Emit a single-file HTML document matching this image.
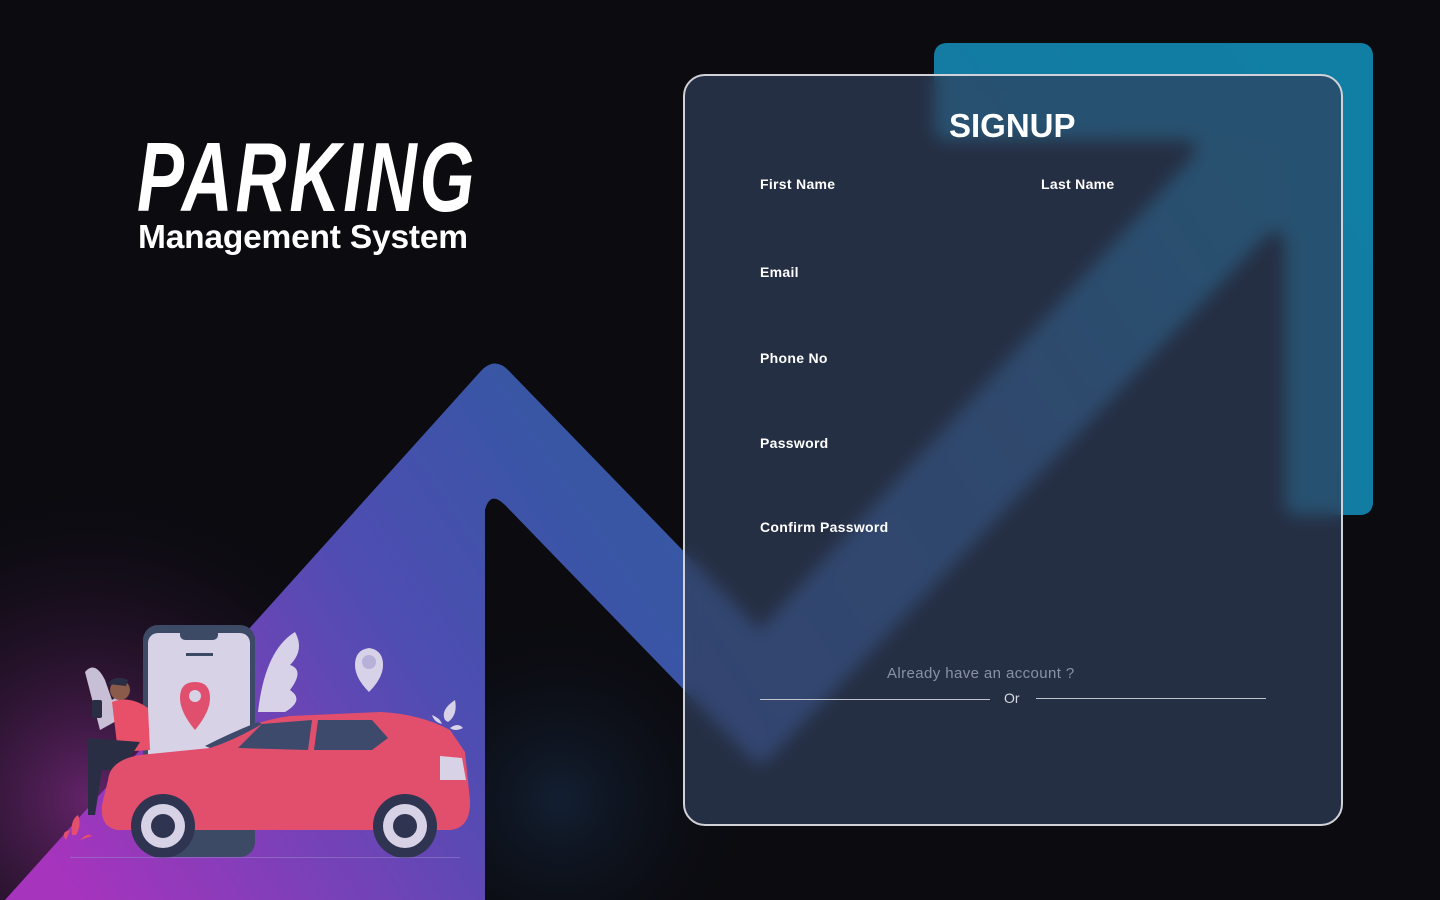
<!DOCTYPE html>
<html><head><meta charset="utf-8"><style>
html,body{margin:0;padding:0;}
body{width:1440px;height:900px;overflow:hidden;background:#0b0b10;position:relative;font-family:"Liberation Sans",sans-serif;}
svg.bg{position:absolute;left:0;top:0;}
.t1{position:absolute;left:137px;top:128px;font:italic bold 98px/1 "Liberation Sans",sans-serif;color:#fff;transform:scaleX(0.72);transform-origin:left top;letter-spacing:4px;}
.t2{position:absolute;left:138px;top:221px;font:bold 33.5px/1 "Liberation Sans",sans-serif;color:#fff;letter-spacing:-0.2px;}
.card{position:absolute;left:683px;top:74px;width:656px;height:748px;border:2px solid #d0d2d8;border-radius:22px;background:rgba(48,62,90,0.7);backdrop-filter:blur(8px);}
.lab{position:absolute;color:#fff;font:bold 14px/1 "Liberation Sans",sans-serif;letter-spacing:0.3px;}
.h{position:absolute;left:949px;top:109px;color:#fff;font:bold 33px/1 "Liberation Sans",sans-serif;}
.al{position:absolute;left:887px;top:666px;color:#8a90a8;font:15px/1 "Liberation Sans",sans-serif;letter-spacing:0.4px;}
.or{position:absolute;left:1004px;top:691px;color:#d6d8de;font:14px/1 "Liberation Sans",sans-serif;}
.ln{position:absolute;height:1px;background:#bfc3cc;}
</style></head><body>
<svg class="bg" width="1440" height="900" viewBox="0 0 1440 900">
<defs>
<linearGradient id="g1" x1="80" y1="900" x2="1300" y2="80" gradientUnits="userSpaceOnUse">
<stop offset="0" stop-color="#a634bd"/><stop offset="0.28" stop-color="#4f4db2"/><stop offset="0.42" stop-color="#3a55a6"/><stop offset="0.7" stop-color="#2d5f98"/><stop offset="0.88" stop-color="#1a77a2"/><stop offset="1" stop-color="#127ea3"/>
</linearGradient>
<radialGradient id="glow" cx="90" cy="800" r="330" gradientUnits="userSpaceOnUse">
<stop offset="0" stop-color="#7a2a80" stop-opacity="0.8"/><stop offset="1" stop-color="#0b0b10" stop-opacity="0"/>
</radialGradient>
<radialGradient id="glow2" cx="560" cy="800" r="200" gradientUnits="userSpaceOnUse">
<stop offset="0" stop-color="#14243a" stop-opacity="0.8"/><stop offset="1" stop-color="#0b0b10" stop-opacity="0"/>
</radialGradient>
</defs>
<rect width="1440" height="900" fill="#0b0b10"/>
<rect width="600" height="900" fill="url(#glow)"/>
<rect x="485" y="500" width="400" height="400" fill="url(#glow2)"/>
<path d="M5 900 L480 372 Q495 355 510 372 L760 630 L1190 160 Q1205 140 1180 140 L948 140 Q934 140 934 126 L934 57 Q934 43 948 43 L1359 43 Q1373 43 1373 57 L1373 501 Q1373 515 1359 515 L1299 515 Q1285 515 1285 501 L1285 245 Q1282 220 1262 240 L770 758 Q760 768 750 758 L505 505 Q490 490 485 510 L485 900 Z" fill="url(#g1)"/>
<path d="M948 43 L1359 43 Q1373 43 1373 57 L1373 501 Q1373 515 1359 515 L1299 515 Q1285 515 1285 501 L1285 140 L948 140 Q934 140 934 126 L934 57 Q934 43 948 43Z" fill="#127ea3" opacity="0.85"/>
<g>
<path d="M85 672 Q95 660 105 680 L112 700 Q125 690 118 720 L100 730 Z" fill="#d8d2e8" opacity="0.9"/>
<path d="M258 712 Q265 650 295 632 Q305 650 290 665 Q305 670 290 690 Q305 700 285 712 Z" fill="#d8d2e8"/>
<path d="M355 665 Q355 650 369 648 Q383 650 383 665 Q383 678 369 692 Q355 678 355 665 Z" fill="#d8d2e8"/><circle cx="369" cy="662" r="7" fill="#b7b0d8"/>
<path d="M445 720 Q440 710 455 700 Q458 715 448 722 Z M432 715 Q440 718 442 724 Q434 722 432 715Z M450 728 Q458 722 463 728 Q455 732 450 728Z" fill="#d8d2e8"/>
<rect x="143" y="625" width="112" height="232" rx="15" fill="#3d4a66"/>
<rect x="148" y="633" width="102" height="160" rx="10" fill="#d8d2e6"/>
<rect x="180" y="628" width="38" height="12" rx="5" fill="#3d4a66"/>
<rect x="186" y="653" width="27" height="3" fill="#3d4a66"/>
<path d="M180 698 Q180 682 195 682 Q210 682 210 698 Q210 712 195 730 Q180 712 180 698Z" fill="#e0506e"/><circle cx="195" cy="696" r="6" fill="#d8d2e6"/>
<circle cx="120" cy="690" r="10" fill="#8a5a4a"/><path d="M108 684 Q115 674 128 680 L126 686 Z" fill="#2a2e44"/>
<path d="M112 702 Q130 695 148 708 L150 750 L118 752 Z" fill="#e8506a"/>
<path d="M88 738 L140 742 L122 770 L102 770 L95 815 L88 815 Z" fill="#2a2e44"/>
<rect x="92" y="700" width="10" height="18" rx="2" fill="#2a2e44"/>
<path d="M108 780 Q110 760 140 755 L210 748 Q245 722 290 716 L380 712 Q420 714 450 730 L465 752 L470 800 Q471 828 450 830 L118 830 Q100 828 102 805 Z" fill="#e24f6d"/>
<path d="M238 748 L262 724 L312 720 L308 750 Z" fill="#3e4a6c"/>
<path d="M318 720 L372 720 L388 738 L372 750 L314 750 Z" fill="#3e4a6c"/>
<path d="M210 748 Q235 740 262 724 L258 722 Q230 733 205 746 Z" fill="#3e4a6c"/>
<path d="M440 756 L462 758 L466 780 L440 780 Z" fill="#d8d2e6"/>
<circle cx="163" cy="826" r="32" fill="#2f3450"/><circle cx="163" cy="826" r="22" fill="#d8d2e6"/><circle cx="163" cy="826" r="12" fill="#2f3450"/>
<circle cx="405" cy="826" r="32" fill="#2f3450"/><circle cx="405" cy="826" r="22" fill="#d8d2e6"/><circle cx="405" cy="826" r="12" fill="#2f3450"/>
<path d="M72 835 Q70 820 78 815 Q82 825 76 835 Z M66 840 Q60 832 70 830 Z M80 840 Q88 832 92 836 Z" fill="#e2506e"/>
<rect x="70" y="857" width="390" height="1" fill="#9a8ad0" opacity="0.5"/>
</g>
</svg>
<div class="t1">PARKING</div>
<div class="t2">Management System</div>
<div class="card"></div>
<div class="h">SIGNUP</div>
<div class="lab" style="left:760px;top:177px">First Name</div>
<div class="lab" style="left:1041px;top:177px">Last Name</div>
<div class="lab" style="left:760px;top:265px">Email</div>
<div class="lab" style="left:760px;top:351px">Phone No</div>
<div class="lab" style="left:760px;top:436px">Password</div>
<div class="lab" style="left:760px;top:520px">Confirm Password</div>
<div class="al">Already have an account ?</div>
<div class="ln" style="left:760px;top:699px;width:230px"></div>
<div class="or">Or</div>
<div class="ln" style="left:1036px;top:698px;width:230px"></div>
</body></html>
